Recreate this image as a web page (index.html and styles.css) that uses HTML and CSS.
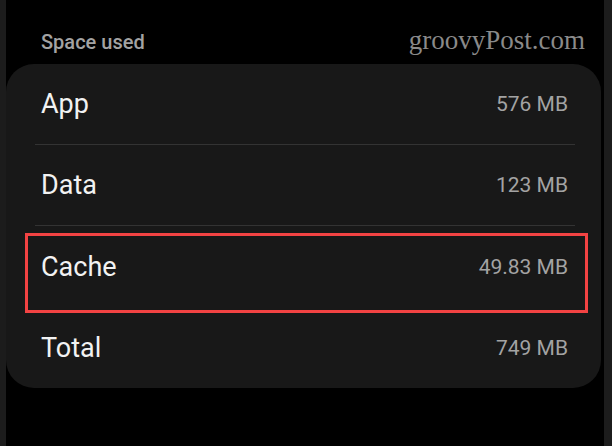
FILE: index.html
```html
<!DOCTYPE html>
<html lang="en">
<head>
    <meta charset="UTF-8">
    <meta name="viewport" content="width=device-width, initial-scale=1.0">
    <title>Storage</title>
    <link rel="stylesheet" href="styles.css">
</head>
<body>
    <div class="frame">
        <div class="screen">
            <div class="section_head">
                <span class="section_title">Space used</span>
                <span class="watermark">groovyPost.com</span>
            </div>
            <div class="card">
                <div class="row">
                    <span class="label">App</span>
                    <span class="value">576 MB</span>
                </div>
                <div class="divider"></div>
                <div class="row">
                    <span class="label">Data</span>
                    <span class="value">123 MB</span>
                </div>
                <div class="divider"></div>
                <div class="row highlighted">
                    <span class="label">Cache</span>
                    <span class="value">49.83 MB</span>
                </div>
                <div class="row">
                    <span class="label">Total</span>
                    <span class="value">749 MB</span>
                </div>
            </div>
        </div>
    </div>
</body>
</html>
```

FILE: styles.css
```css
* {
    box-sizing: border-box;
}
body {
    margin: 0;
    background-color: #000;
    font-family: Roboto, "Liberation Sans", sans-serif;
}

.frame {
    height: 446px;
    border-left: 6px solid #1c1c1c;
    border-right: 8px solid #1c1c1c;
    background-color: #000;
}
.screen {
    padding-right: 3px;
}

.section_head {
    height: 64px;
    display: flex;
    justify-content: space-between;
    align-items: baseline;
    padding: 25px 16px 0 35px;
}
.section_title {
    font-size: 20px;
    font-weight: 500;
    color: #a3a3a3;
}
.watermark {
    font-family: "Liberation Serif", serif;
    font-size: 27px;
    color: #8a8a8a;
}

.card {
    background-color: #181818;
    border-radius: 28px;
}
.row {
    position: relative;
    height: 80px;
    display: flex;
    justify-content: space-between;
    align-items: center;
    padding: 0 33px 0 35px;
}
.label {
    font-size: 27px;
    color: #f2f2f2;
}
.value {
    font-size: 21px;
    color: #a3a3a3;
}
.divider {
    height: 1px;
    margin: 0 26px 0 29px;
    background-color: #333;
}

.highlighted {
    height: 82px;
}
.highlighted::after {
    content: "";
    position: absolute;
    top: 7px;
    bottom: -5px;
    left: 19px;
    right: 13px;
    border: 3px solid #f34343;
}
```
